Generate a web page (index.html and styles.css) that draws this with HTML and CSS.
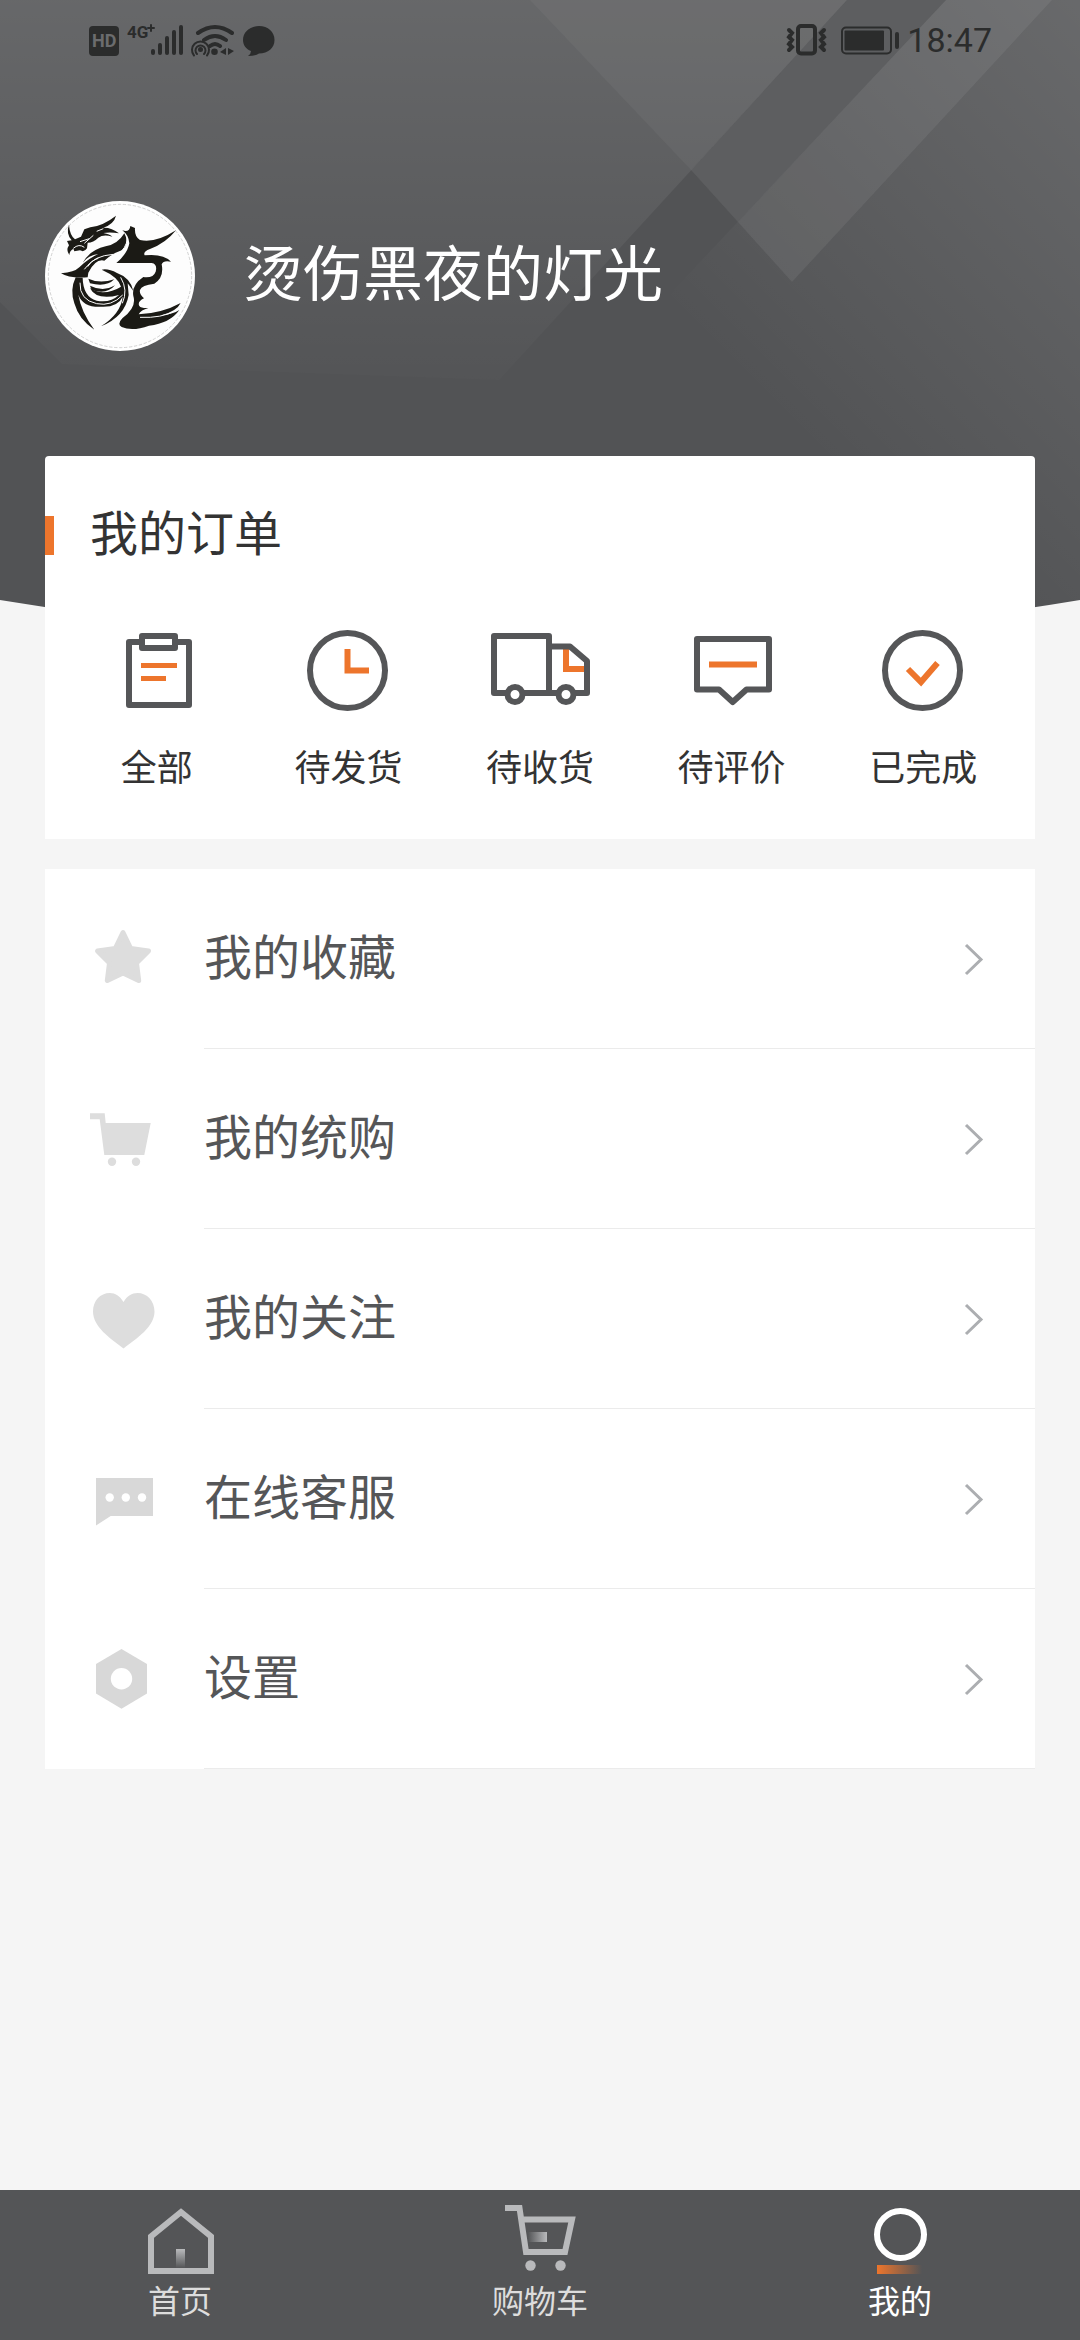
FILE: index.html
```html
<!DOCTYPE html>
<html lang="zh-CN">
<head>
  <meta charset="UTF-8">
  <meta name="viewport" content="width=device-width, initial-scale=1">
  <title>我的</title>
  <link rel="stylesheet" href="styles.css">
</head>
<body>

  <header class="header">
    <svg class="header-bg" viewBox="0 0 1080 640" preserveAspectRatio="none" aria-hidden="true">
      <defs>
        <linearGradient id="fade-down" x1="0" y1="0" x2="0" y2="1">
          <stop offset="0" stop-color="#fff" stop-opacity=".12"/>
          <stop offset="1" stop-color="#fff" stop-opacity=".01"/>
        </linearGradient>
        <linearGradient id="fade-side" gradientUnits="userSpaceOnUse" x1="1080" y1="0" x2="720" y2="360">
          <stop offset="0" stop-color="#fff" stop-opacity=".13"/>
          <stop offset="1" stop-color="#fff" stop-opacity="0"/>
        </linearGradient>
      </defs>
      <path fill="#525355" d="M0 0H1080V600Q540 690 0 600Z"/>
      <path fill="url(#fade-down)" d="M0 0H847L499 380L62 364L0 302Z"/>
      <path fill="#fff" fill-opacity=".03" d="M847 0H946L738 222L691 170Z"/>
      <path fill="#fff" fill-opacity=".04" d="M530 0H847L691 170Z"/>
      <path fill="#fff" fill-opacity=".04" d="M847 0H1052L792 282L691 170Z"/>
      <path fill="url(#fade-side)" d="M946 0H1080V600H900L640 326Z"/>
      <path fill="#fff" fill-opacity=".03" d="M946 0H1052L792 282L738 222Z"/>
    </svg>

    <div class="status-bar">
      <svg class="status-left" viewBox="0 0 190 40" aria-hidden="true">
        <rect x="4" y="6" width="30" height="30" rx="4"/>
        <text class="hd" x="7" y="27">HD</text>
        <text class="net" x="42" y="18">4G</text>
        <path d="M63 8H69M66 5V11" class="line thin"/>
        <path class="line" d="M68 31V33M75 25V33M82 18V33M89 12V33M96 7V33"/>
        <path class="line" d="M113 13Q130 1 147 13M119 20Q130 12 141 20M125 26Q130 22 135 26"/>
        <circle cx="129.500" cy="31.700" r="3.300"/>
        <circle cx="115.500" cy="29.500" r="2.500"/>
        <path class="line thin" d="M112 34A5 5 0 1 1 119 34M109 35.500A8.500 8.500 0 1 1 122 35.500"/>
        <path d="M141 28V35L135 32ZM143 28L149 31L143 35Z"/>
        <path d="M174 6C183 6 189.500 12 189.500 20C189.500 28 183 33.500 174 33.500Q170 36 163 36Q166 34 166 31C161 29 158 25 158 20C158 12 165 6 174 6Z"/>
      </svg>
      <div class="status-right">
        <svg viewBox="0 0 116 40" width="116" height="40" aria-hidden="true">
          <rect class="line" x="12" y="6" width="17" height="27.500" rx="3"/>
          <path class="line" d="M3 10L6 13L3 17L6 20L3 24L6 27L3 30M38 10L35 13L38 17L35 20L38 24L35 27L38 30"/>
          <rect class="line frame" x="56" y="7.500" width="49" height="26" rx="4"/>
          <rect x="58.500" y="10.500" width="39.500" height="20" rx="1"/>
          <rect x="109" y="12" width="4" height="17" rx="2"/>
        </svg>
        <span class="time">18:47</span>
      </div>
    </div>

    <div class="profile">
      <svg class="avatar" viewBox="30 33 450 450" role="img" aria-label="头像">
        <circle cx="255" cy="258" r="225" fill="#fff"/>
        <circle cx="255" cy="258" r="215" fill="#fdfdfd" stroke="#bbb" stroke-width="2" stroke-dasharray="10 5"/>
        <g fill="#1b1a15">
          <path d="M102 104Q104 135 120 148L138 140L148 118L166 112Q205 107 243 77Q237 102 205 113Q230 112 252 130Q225 125 205 129Q225 133 232 140Q205 132 190 143Q175 158 158 158L156 175Q148 188 135 181L118 184L115 176Q104 182 103 195Q92 180 102 166L96 153L110 151Q92 130 102 104Z"/>
          <path d="M143 218Q165 180 212 169Q248 163 268 130Q284 158 262 180Q232 190 208 212Q182 205 160 248L158 262Q100 265 78 250Q118 247 133 232Q160 205 190 192Q160 196 143 218Z"/>
          <path d="M262 121Q284 128 286 108L300 114Q298 140 315 150Q362 160 423 121Q392 160 345 177Q323 185 329 196Q385 190 408 215Q385 210 380 223Q388 262 358 281Q320 285 315 300Q312 312 327 325Q306 335 313 348Q318 355 340 354Q318 360 311 373Q380 370 437 339Q425 365 375 377Q414 373 433 360Q405 400 342 407Q292 425 260 411Q245 403 262 385Q306 352 295 318Q289 285 325 261Q355 265 362 245Q368 222 350 219L244 219Q278 190 283 160Q281 135 262 121Z"/>
          <path d="M122 262Q104 300 118 340Q132 390 178 419Q138 365 130 314Q145 355 205 350Q250 350 263 320Q258 370 198 409Q270 380 281 315L278 280L295 303Q286 263 246 249Q220 235 200 239Q250 261 258 290Q228 309 195 306Q175 302 164 293Q185 333 252 315Q225 340 185 332Q144 320 143 263Z"/>
          <path d="M160 266Q194 282 238 268Q215 292 165 280ZM165 287Q205 307 240 286Q215 315 170 300Z"/>
        </g>
        <g fill="none" stroke="#fdfdfd" stroke-width="3">
          <path d="M115 175Q132 160 148 172M135 155L163 146M148 160L175 136M185 124L205 116"/>
          <path d="M158 230Q175 198 235 193M148 238Q170 210 190 205M244 197Q275 175 277 145"/>
          <path d="M135 278Q133 330 185 341Q230 350 263 315M257 262Q280 300 262 340M315 382Q380 385 422 362"/>
        </g>
      </svg>
      <h1 class="username">烫伤黑夜的灯光</h1>
    </div>
  </header>

  <main class="content">
    <section class="card orders">
      <h2 class="orders-title">我的订单</h2>
      <div class="order-grid">
        <a href="#" class="order-item">
          <svg viewBox="0 0 110 110" aria-hidden="true">
            <rect x="27" y="27" width="60" height="63"/>
            <rect x="40" y="21" width="33" height="12" fill="#fff"/>
            <path class="accent thin" d="M39 50.500H75M39 63.500H64"/>
          </svg>
          <span>全部</span>
        </a>
        <a href="#" class="order-item">
          <svg viewBox="0 0 110 110" aria-hidden="true">
            <circle cx="54.500" cy="55.500" r="37.500"/>
            <path class="accent" d="M54.500 34V55.500H76"/>
          </svg>
          <span>待发货</span>
        </a>
        <a href="#" class="order-item">
          <svg viewBox="0 0 110 110" aria-hidden="true">
            <path class="accent" d="M81 33V54H100"/>
            <rect x="9" y="21" width="55" height="57"/>
            <path d="M64 31.500H85L102 46V78H64"/>
            <circle cx="30" cy="79.500" r="7.500" fill="#fff"/>
            <circle cx="81" cy="79.500" r="7.500" fill="#fff"/>
          </svg>
          <span>待收货</span>
        </a>
        <a href="#" class="order-item">
          <svg viewBox="0 0 110 110" aria-hidden="true">
            <path d="M20 24H92V74.500H69.500L55.700 87L42 74.500H20Z"/>
            <path class="accent" d="M32 49.500H80"/>
          </svg>
          <span>待评价</span>
        </a>
        <a href="#" class="order-item">
          <svg viewBox="0 0 110 110" aria-hidden="true">
            <circle cx="54.500" cy="55.500" r="37.500"/>
            <path class="accent" d="M40 54L53 67L69.500 48"/>
          </svg>
          <span>已完成</span>
        </a>
      </div>
    </section>

    <nav class="card menu">
      <a href="#" class="menu-item">
        <svg class="menu-icon" viewBox="0 0 72 72" aria-hidden="true">
          <path class="rounded" d="M38 9.500L45.700 25.500L63.500 28L51.500 40L53.700 57.500L38 50L22.300 57.500L24.500 40L12.500 28L30.300 25.500Z"/>
        </svg>
        <span class="menu-label">我的收藏
          <svg class="arrow" viewBox="0 0 24 36" aria-hidden="true"><path d="M3 4L18 18.500L3 33"/></svg>
        </span>
      </a>
      <a href="#" class="menu-item">
        <svg class="menu-icon" viewBox="0 0 72 72" aria-hidden="true">
          <path d="M5 10.300H19.700L20.700 20H65.700L59.300 52H19.300L14.700 16.300H5Z"/>
          <circle cx="27" cy="58.700" r="4.200"/>
          <circle cx="51" cy="58.700" r="4.200"/>
        </svg>
        <span class="menu-label">我的统购
          <svg class="arrow" viewBox="0 0 24 36" aria-hidden="true"><path d="M3 4L18 18.500L3 33"/></svg>
        </span>
      </a>
      <a href="#" class="menu-item">
        <svg class="menu-icon" viewBox="0 0 72 72" aria-hidden="true">
          <path d="M38.500 19C35 13 30 10 25 10C15 10 8 18 8 28.500C8 44 25 55 38.500 65.500C52 55 69.500 44 69.500 28.500C69.500 18 62 10 52.500 10C47 10 42 13 38.500 19Z"/>
        </svg>
        <span class="menu-label">我的关注
          <svg class="arrow" viewBox="0 0 24 36" aria-hidden="true"><path d="M3 4L18 18.500L3 33"/></svg>
        </span>
      </a>
      <a href="#" class="menu-item">
        <svg class="menu-icon dark" viewBox="0 0 72 72" aria-hidden="true">
          <path d="M11 15H68V53H25.700L11 62.500Z"/>
          <g fill="#fff"><circle cx="24.700" cy="34.500" r="4.200"/><circle cx="40.800" cy="34.500" r="4.200"/><circle cx="57" cy="34.500" r="4.200"/></g>
        </svg>
        <span class="menu-label">在线客服
          <svg class="arrow" viewBox="0 0 24 36" aria-hidden="true"><path d="M3 4L18 18.500L3 33"/></svg>
        </span>
      </a>
      <a href="#" class="menu-item">
        <svg class="menu-icon dark" viewBox="0 0 72 72" aria-hidden="true">
          <path d="M36.500 6L62 21V50.500L36.500 65.700L11 50.500V21Z"/>
          <circle cx="36.500" cy="35.700" r="10.700" fill="#fff"/>
        </svg>
        <span class="menu-label">设置
          <svg class="arrow" viewBox="0 0 24 36" aria-hidden="true"><path d="M3 4L18 18.500L3 33"/></svg>
        </span>
      </a>
    </nav>
  </main>

  <nav class="tab-bar">
    <a href="#" class="tab">
      <svg viewBox="0 0 72 72" aria-hidden="true">
        <defs>
          <linearGradient id="door" x1="0" y1="0" x2="0" y2="1">
            <stop offset="0" stop-color="#b9babc"/>
            <stop offset="1" stop-color="#b9babc" stop-opacity="0"/>
          </linearGradient>
        </defs>
        <path d="M7 66V31.500L37 7L67 31.500V66Z"/>
        <rect class="fill" x="32" y="44" width="9" height="19" fill="url(#door)"/>
      </svg>
      <span>首页</span>
    </a>
    <a href="#" class="tab">
      <svg viewBox="0 0 72 72" aria-hidden="true">
        <defs>
          <linearGradient id="goods">
            <stop offset="0" stop-color="#b9babc" stop-opacity="0"/>
            <stop offset="1" stop-color="#b9babc"/>
          </linearGradient>
        </defs>
        <path d="M1 3H15.500L22 47H61L68 14.500H17"/>
        <rect class="fill" x="24" y="27" width="19" height="10" fill="url(#goods)"/>
        <circle class="fill" cx="26.500" cy="60.500" r="5.200" fill="#b9babc"/>
        <circle class="fill" cx="56.500" cy="60.500" r="5.200" fill="#b9babc"/>
      </svg>
      <span>购物车</span>
    </a>
    <a href="#" class="tab active">
      <svg viewBox="0 0 72 72" aria-hidden="true">
        <defs>
          <linearGradient id="glow">
            <stop offset="0" stop-color="#ed752c"/>
            <stop offset="1" stop-color="#ed752c" stop-opacity="0"/>
          </linearGradient>
        </defs>
        <circle cx="36.500" cy="29.500" r="23.500"/>
        <rect class="fill" x="13" y="60" width="45" height="9" fill="url(#glow)"/>
      </svg>
      <span>我的</span>
    </a>
  </nav>

</body>
</html>
```
FILE: styles.css
```css
* {
  box-sizing: border-box;
}

body {
  margin: 0;
  min-height: 100vh;
  display: flex;
  flex-direction: column;
  background: #f5f5f5;
  color: #333;
  font-family: Roboto, "Noto Sans CJK SC", sans-serif;
}

a {
  color: inherit;
  text-decoration: none;
}

h1,
h2 {
  margin: 0;
  font-weight: 400;
}

svg {
  display: block;
  flex-shrink: 0;
}

/* header */
.header {
  position: relative;
  padding-bottom: 105px;
}

.header-bg {
  position: absolute;
  top: 0;
  left: 0;
  z-index: -1;
  width: 100%;
  height: 640px;
}

.status-bar {
  display: flex;
  justify-content: space-between;
  align-items: center;
  height: 80px;
  padding: 0 88px 0 85px;
  fill: #2b2c2c;
  color: #2b2c2c;
}

.status-bar .line {
  fill: none;
  stroke: #2b2c2c;
  stroke-width: 4;
  stroke-linecap: round;
}

.status-bar .thin,
.status-bar .frame {
  stroke-width: 2;
}

.status-left {
  width: 190px;
  height: 40px;
}

.hd,
.net {
  font-weight: 700;
  font-size: 18px;
}

.hd {
  fill: #6b6c6e;
}

.net {
  font-size: 17px;
}

.status-right {
  display: flex;
  align-items: center;
  gap: 5px;
}

.time {
  font-size: 34px;
  line-height: 42px;
}

.profile {
  display: flex;
  align-items: center;
  gap: 48px;
  padding: 121px 45px 0;
}

.avatar {
  width: 150px;
  height: 150px;
}

.username {
  color: #fff;
  font-size: 60px;
  line-height: 80px;
}

/* cards */
.content {
  flex: 1;
  position: relative;
  padding: 0 45px 30px;
}

.card {
  background: #fff;
}

.orders {
  border-radius: 4px 4px 0 0;
  padding: 50px 0 46px;
  margin-bottom: 30px;
}

.orders-title {
  display: flex;
  align-items: center;
  gap: 36px;
  font-size: 48px;
  line-height: 58px;
}

.orders-title::before {
  content: "";
  width: 9px;
  height: 39px;
  background: #ed752c;
}

.order-grid {
  display: grid;
  grid-template-columns: repeat(5, 1fr);
  padding: 51px 16px 0;
}

.order-item {
  display: flex;
  flex-direction: column;
  align-items: center;
  gap: 20px;
  font-size: 36px;
  line-height: 48px;
}

.order-item svg {
  width: 110px;
  height: 110px;
  fill: none;
  stroke: #555658;
  stroke-width: 6;
  stroke-linejoin: round;
}

.order-item .accent {
  stroke: #ed752c;
  stroke-linejoin: miter;
}

.order-item .thin {
  stroke-width: 5;
}

/* menu list */
.menu-item {
  display: flex;
  align-items: center;
  gap: 47px;
  padding-left: 40px;
  color: #555658;
  font-size: 48px;
  line-height: 58px;
}

.menu-icon {
  width: 72px;
  height: 72px;
  fill: #ddd;
}

.menu-icon.dark {
  fill: #d8d8d8;
}

.rounded {
  stroke: #ddd;
  stroke-width: 5;
  stroke-linejoin: round;
}

.menu-label {
  flex: 1;
  display: flex;
  align-items: center;
  justify-content: space-between;
  height: 180px;
  padding-right: 48px;
  border-bottom: 1px solid #ebebeb;
}

.arrow {
  width: 24px;
  height: 36px;
  fill: none;
  stroke: #acaeb1;
  stroke-width: 3;
}

/* bottom tabs */
.tab-bar {
  display: flex;
  height: 150px;
  background: #545557;
}

.tab {
  flex: 1;
  display: flex;
  flex-direction: column;
  align-items: center;
  padding-top: 15px;
  color: #ddd;
  font-size: 32px;
  line-height: 50px;
}

.tab svg {
  width: 72px;
  height: 72px;
  fill: none;
  stroke: #b9babc;
  stroke-width: 6;
}

.tab .fill {
  stroke: none;
}

.tab.active {
  color: #fff;
}

.tab.active svg {
  stroke: #fff;
}
```
